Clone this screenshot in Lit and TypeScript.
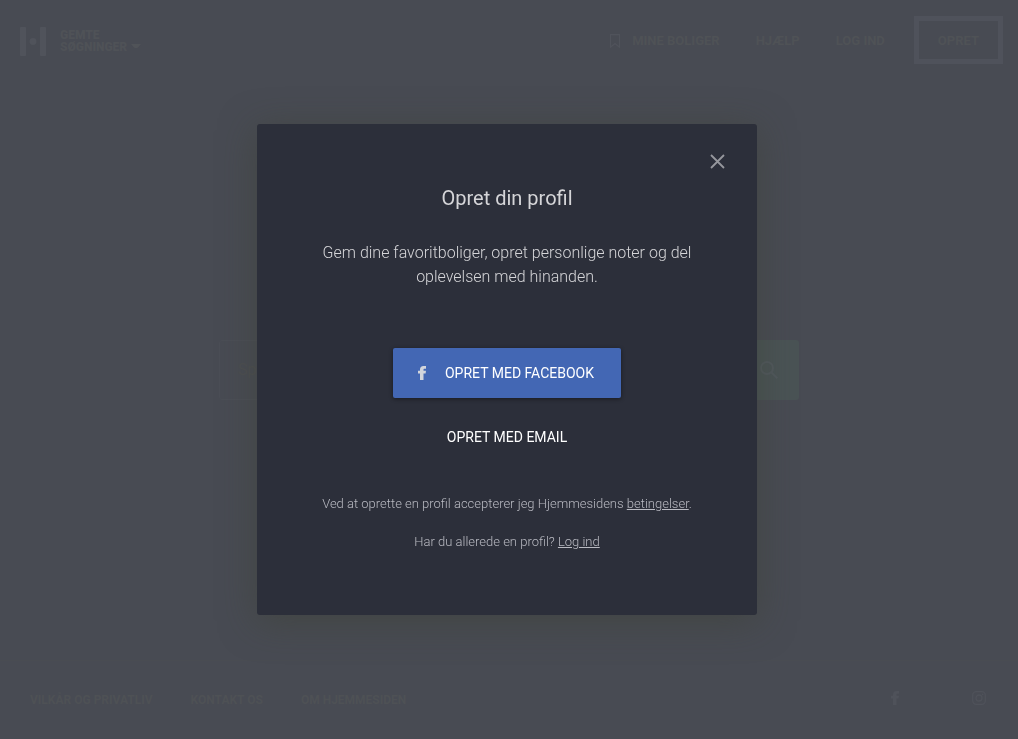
import { LitElement, html, css, svg } from "lit";
import { customElement, state } from "lit/decorators.js";

const facebookPath = svg`<path d="M2 14V7.600H0V4.800h2V3.500C2 1.200 3.300 0 5.400 0H8v2.800H6.500c-.7 0-1 .3-1 1v1H8l-.4 2.800H5.500V14z" />`;

@customElement("site-header")
export class SiteHeader extends LitElement {
  static styles = css`
    :host {
      display: block;
    }
    .bar {
      display: flex;
      align-items: center;
      justify-content: space-between;
      height: 80px;
      padding: 0 15px 0 20px;
      box-sizing: border-box;
    }
    .brand,
    .nav {
      display: flex;
      align-items: center;
    }
    .brand {
      gap: 14px;
      padding-top: 2px;
    }
    .logo {
      display: block;
      fill: #50535b;
    }
    .saved {
      display: flex;
      align-items: flex-end;
      gap: 4px;
      padding: 0;
      border: 0;
      background: none;
      color: #4f5257;
      font: 900 12px/12px Roboto, sans-serif;
      text-align: left;
      text-transform: uppercase;
    }
    .caret {
      fill: #505358;
      margin-bottom: 5px;
    }
    .link {
      display: flex;
      align-items: center;
      gap: 11px;
      padding-top: 2px;
      color: #4f5256;
      font: 700 13px/16px Roboto, sans-serif;
      text-decoration: none;
      text-transform: uppercase;
    }
    .nav {
      gap: 36px;
    }
    .bookmark {
      fill: none;
      stroke: #50535b;
      stroke-width: 1.2;
    }
    .create {
      box-sizing: border-box;
      height: 48px;
      margin-left: -7px;
      padding: 2px 19px 0;
      border: 5px solid #4f525b;
      background: none;
      color: #4f5256;
      font: 700 13px/16px Roboto, sans-serif;
      text-transform: uppercase;
    }
  `;

  render() {
    return html`
      <header class="bar">
        <div class="brand">
          <svg class="logo" width="26" height="29" viewBox="0 0 26 29" aria-hidden="true">
            <rect width="6" height="29" rx="1" />
            <rect x="20" width="6" height="29" rx="1" />
            <circle cx="13" cy="14.500" r="3.400" />
          </svg>
          <button class="saved" type="button">
            <span>Gemte<br />søgninger</span>
            <svg class="caret" width="10" height="4" viewBox="0 0 10 4" aria-hidden="true">
              <path d="M0 0h10L7 3.500Q5 4.500 3 3.500z" />
            </svg>
          </button>
        </div>
        <nav class="nav">
          <a class="link" href="#boliger">
            <svg class="bookmark" width="12" height="15" viewBox="0 0 12 15" aria-hidden="true">
              <path d="M1.500.7h9v12.600L6 9.500l-4.500 3.800z" />
            </svg>
            Mine boliger
          </a>
          <a class="link" href="#hjaelp">Hjælp</a>
          <a class="link" href="#login">Log ind</a>
          <button class="create" type="button">Opret</button>
        </nav>
      </header>
    `;
  }
}

@customElement("site-search")
export class SiteSearch extends LitElement {
  static styles = css`
    :host {
      display: block;
      width: 100%;
      max-width: 580px;
    }
    .form {
      display: flex;
      height: 60px;
    }
    .field {
      flex: 1;
      min-width: 0;
      box-sizing: border-box;
      padding: 0 18px;
      border: 1px solid #4b4e56;
      border-radius: 3px 0 0 3px;
      background: #484b53;
      color: #4c4e51;
      font: 400 16px/24px Roboto, sans-serif;
    }
    .field::placeholder {
      color: #4c4e51;
    }
    .submit {
      display: flex;
      align-items: center;
      justify-content: center;
      width: 60px;
      padding: 0;
      border: 0;
      border-radius: 0 3px 3px 0;
      background: #4a5355;
    }
    .glass {
      fill: none;
      stroke: #51585d;
      stroke-width: 2;
    }
  `;

  render() {
    return html`
      <form class="form" role="search" @submit=${(e: Event) => e.preventDefault()}>
        <input class="field" type="text" aria-label="Spørg" placeholder="Spørg" />
        <button class="submit" type="submit" aria-label="Søg">
          <svg class="glass" width="18" height="18" viewBox="0 0 18 18" aria-hidden="true">
            <circle cx="7" cy="7" r="6" />
            <path d="M11.300 11.300l6 6" />
          </svg>
        </button>
      </form>
    `;
  }
}

@customElement("site-footer")
export class SiteFooter extends LitElement {
  static styles = css`
    :host {
      display: block;
    }
    .bar {
      display: flex;
      align-items: center;
      justify-content: space-between;
      box-sizing: border-box;
      height: 79px;
      padding: 0 31px 0 30px;
      border-top: 1px solid #494c52;
    }
    .links {
      display: flex;
      gap: 38px;
    }
    .social {
      display: flex;
      align-items: center;
      gap: 72px;
      padding-bottom: 4px;
    }
    .link {
      display: block;
      color: #4e5155;
      font: 700 12px/16px Roboto, sans-serif;
      text-decoration: none;
      text-transform: uppercase;
    }
    .icon {
      display: block;
      fill: #4f525a;
    }
    .outline {
      fill: none;
      stroke: #4f525a;
    }
  `;

  render() {
    return html`
      <footer class="bar">
        <nav class="links">
          <a class="link" href="#vilkar">Vilkår og privatliv</a>
          <a class="link" href="#kontakt">Kontakt os</a>
          <a class="link" href="#om">Om Hjemmesiden</a>
        </nav>
        <div class="social">
          <a class="link" href="#facebook" aria-label="Facebook">
            <svg class="icon" width="8" height="14" viewBox="0 0 8 14">${facebookPath}</svg>
          </a>
          <a class="link" href="#instagram" aria-label="Instagram">
            <svg class="icon" width="16" height="14" viewBox="0 0 16 14">
              <rect class="outline" x="1.700" y=".7" width="12.600" height="12.600" rx="3.500" stroke-width="1.300" />
              <circle class="outline" cx="8" cy="7" r="3" stroke-width="1.300" />
              <circle cx="11.700" cy="3.400" r=".8" />
            </svg>
          </a>
        </div>
      </footer>
    `;
  }
}

@customElement("signup-dialog")
export class SignupDialog extends LitElement {
  static styles = css`
    .panel {
      display: flex;
      flex-direction: column;
      align-items: center;
      box-sizing: border-box;
      width: 500px;
      max-width: 100vw;
      padding: 30px 32px 45px;
      border-radius: 3px;
      background: #2c2f3a;
      box-shadow: 0 6px 36px rgba(60, 64, 50, 0.5);
      color: #d5d5d8;
      font: 300 16px/24px Roboto, sans-serif;
      text-align: center;
    }
    .close {
      align-self: flex-end;
      display: block;
      padding: 0;
      border: 0;
      background: none;
      stroke: #96979d;
      stroke-width: 1.8;
    }
    .cross {
      display: block;
    }
    .title {
      margin: 15px 0 0;
      font-size: 20px;
      font-weight: 400;
      line-height: 28px;
    }
    .lead {
      max-width: 380px;
      margin: 29px 0 59px;
    }
    .facebook,
    .email {
      display: flex;
      align-items: center;
      border: 0;
      color: #fff;
      font: 400 14px/20px Roboto, sans-serif;
      text-transform: uppercase;
    }
    .facebook {
      gap: 19px;
      height: 50px;
      padding: 0 27px 0 25px;
      border-radius: 2px;
      background: #4367b4;
      box-shadow: 0 1px 4px rgba(0, 0, 0, 0.45);
    }
    .mark {
      fill: #d2d5dc;
    }
    .email {
      margin: 19px 0 37px;
      padding: 10px 20px;
      background: none;
    }
    .note {
      margin: 0 0 18px;
      color: #b9bac2;
      font-size: 13px;
      line-height: 20px;
    }
    .note-link {
      color: inherit;
      text-decoration: underline;
    }
  `;

  private close() {
    this.dispatchEvent(new CustomEvent("dismiss"));
  }

  render() {
    return html`
      <section class="panel" role="dialog" aria-labelledby="title">
        <button class="close" type="button" aria-label="Luk" @click=${this.close}>
          <svg class="cross" width="15" height="15" viewBox="0 0 15 15" aria-hidden="true">
            <path d="M1 1l13 13M14 1L1 14" />
          </svg>
        </button>
        <h1 class="title" id="title">Opret din profil</h1>
        <p class="lead">
          Gem dine favoritboliger, opret personlige noter og del oplevelsen med hinanden.
        </p>
        <button class="facebook" type="button">
          <svg class="mark" width="8" height="14" viewBox="0 0 8 14" aria-hidden="true">${facebookPath}</svg>
          Opret med Facebook
        </button>
        <button class="email" type="button">Opret med email</button>
        <p class="note">
          Ved at oprette en profil accepterer jeg Hjemmesidens
          <a class="note-link" href="#betingelser">betingelser</a>.
        </p>
        <p class="note">Har du allerede en profil? <a class="note-link" href="#login">Log ind</a></p>
      </section>
    `;
  }
}

@customElement("app-root")
export class AppRoot extends LitElement {
  static styles = css`
    :host {
      display: block;
      background: #484b53;
    }
    .page {
      display: flex;
      flex-direction: column;
      min-height: 100vh;
    }
    .main {
      flex: 1;
      display: flex;
      align-items: center;
      justify-content: center;
    }
    .overlay {
      position: fixed;
      inset: 0;
      display: flex;
      align-items: center;
      justify-content: center;
      padding-right: 4px;
    }
  `;

  @state() private open = true;

  render() {
    return html`
      <div class="page">
        <site-header></site-header>
        <main class="main"><site-search></site-search></main>
        <site-footer></site-footer>
      </div>
      ${this.open
        ? html`<div class="overlay">
            <signup-dialog @dismiss=${() => (this.open = false)}></signup-dialog>
          </div>`
        : null}
    `;
  }
}
